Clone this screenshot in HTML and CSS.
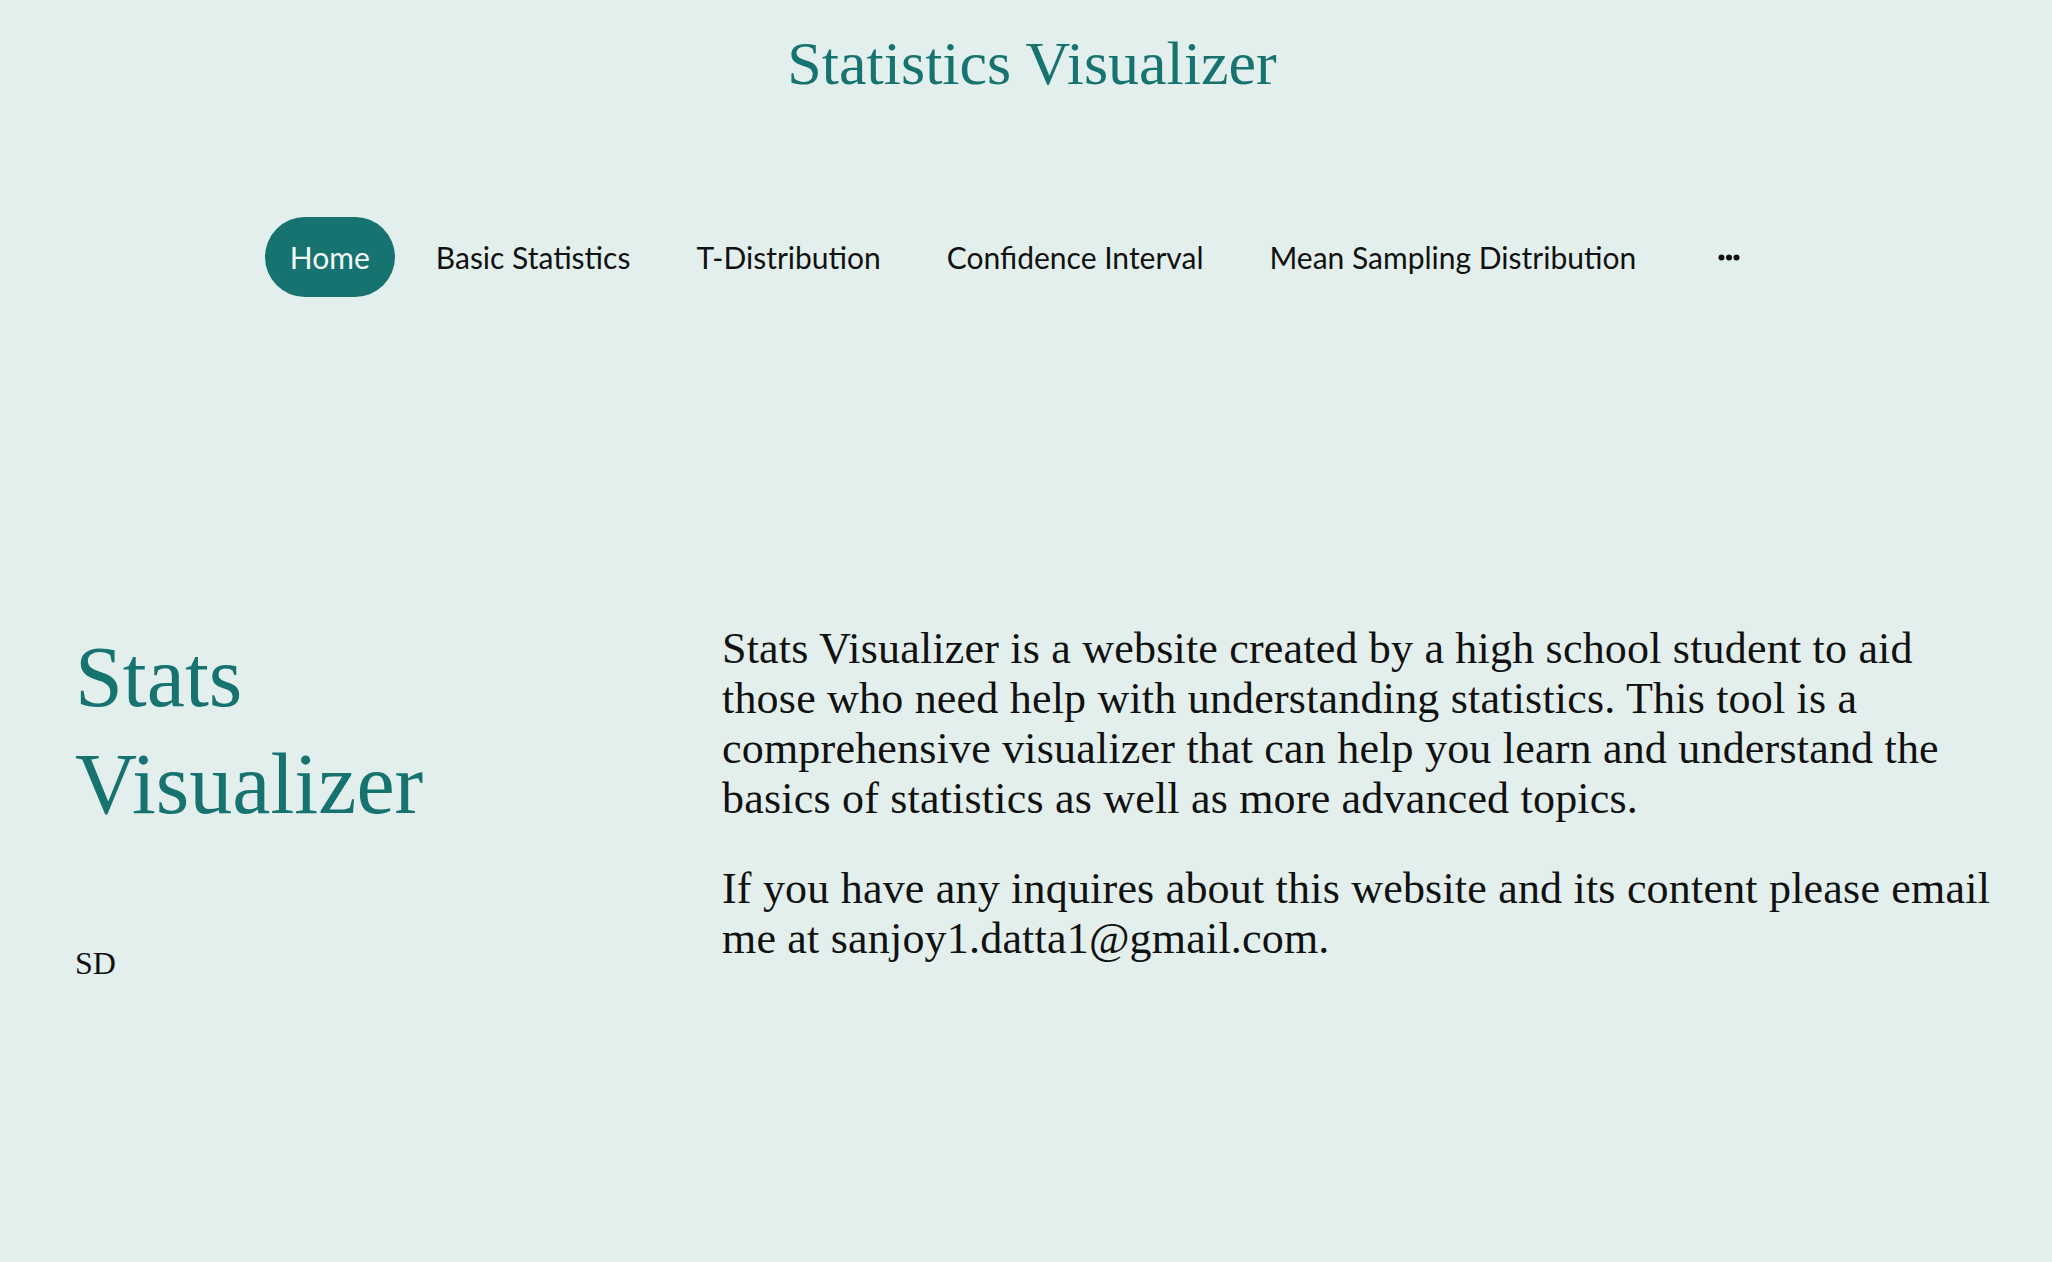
FILE: index.html
```html
<!DOCTYPE html>
<html lang="en">
<head>
<meta charset="utf-8">
<title>Statistics Visualizer</title>
<link rel="stylesheet" href="styles.css">
</head>
<body>
<header class="site-header">
  <h1 class="site-title">Statistics Visualizer</h1>
  <nav class="site-nav">
    <a class="nav-item nav-active" href="#">Home</a>
    <a class="nav-item" href="#">Basic Statistics</a>
    <a class="nav-item" href="#">T-Distribution</a>
    <a class="nav-item" href="#">Confidence Interval</a>
    <a class="nav-item" href="#">Mean Sampling Distribution</a>
    <button class="nav-more" type="button" aria-label="More">
      <svg width="22" height="7" viewBox="0 0 22 7"><circle cx="3.5" cy="3.5" r="3"/><circle cx="11" cy="3.5" r="3"/><circle cx="18.5" cy="3.5" r="3"/></svg>
    </button>
  </nav>
</header>
<main class="hero">
  <div class="hero-left">
    <h2 class="hero-title">Stats<br>Visualizer</h2>
    <p class="hero-sign">SD</p>
  </div>
  <div class="hero-right">
    <p class="hero-text">Stats Visualizer is a website created by a high school student to aid<br>those who need help with understanding statistics. This tool is a<br>comprehensive visualizer that can help you learn and understand the<br>basics of statistics as well as more advanced topics.</p>
    <p class="hero-text">If you have any inquires about this website and its content please email<br>me at sanjoy1.datta1@gmail.com.</p>
  </div>
</main>
</body>
</html>
```
FILE: styles.css
```css
html, body {
  margin: 0;
  padding: 0;
}
body {
  background: #e3efec;
  color: #111;
  width: 2052px;
  min-height: 1262px;
}
.site-header {
  display: flex;
  flex-direction: column;
  align-items: center;
  padding-top: 33px;
}
.site-title {
  margin: 0 0 0 12px;
  font-family: "Liberation Serif", "Times New Roman", serif;
  font-weight: 400;
  font-size: 62px;
  line-height: 60px;
  color: #167370;
}
.site-nav {
  display: flex;
  align-items: center;
  gap: 16px;
  margin-top: 124px;
  padding-right: 22px;
  font-family: "Lato", "Noto Sans", sans-serif;
  font-size: 30px;
}
.nav-item {
  display: flex;
  align-items: center;
  height: 80px;
  padding: 0 25px;
  border-radius: 40px;
  color: #111;
  text-decoration: none;
}
.nav-active {
  background: #167370;
  color: #f4f9f8;
}
.nav-more {
  display: flex;
  align-items: center;
  height: 80px;
  padding: 0 25px;
  margin-left: 16px;
  border: 0;
  background: none;
  fill: #111;
}
.hero {
  display: grid;
  grid-template-columns: 647px 1320px;
  padding: 0 0 0 75px;
  margin-top: 327px;
}
.hero-title {
  margin: 0;
  font-family: "Liberation Serif", "Times New Roman", serif;
  font-weight: 400;
  font-size: 86px;
  line-height: 107px;
  color: #167370;
}
.hero-sign {
  margin: 105px 0 0;
  font-family: "Liberation Serif", "Times New Roman", serif;
  font-size: 32px;
  line-height: 40px;
}
.hero-text {
  margin: 0 0 40px;
  font-family: "Liberation Serif", "Times New Roman", serif;
  font-size: 44px;
  letter-spacing: 0.2px;
  line-height: 50px;
  white-space: nowrap;
  color: #111;
}
```
